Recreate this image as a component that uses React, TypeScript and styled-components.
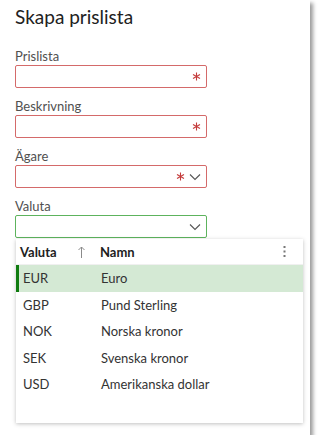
import styled, { createGlobalStyle } from "styled-components";

const GlobalStyle = createGlobalStyle`
  body {
    margin: 0;
    background: #ffffff;
    font-family: "Lato", "Open Sans", sans-serif;
  }
`;

const currencies = [
  { code: "EUR", name: "Euro" },
  { code: "GBP", name: "Pund Sterling" },
  { code: "NOK", name: "Norska kronor" },
  { code: "SEK", name: "Svenska kronor" },
  { code: "USD", name: "Amerikanska dollar" },
];

const Panel = styled.div`
  width: 310px;
  height: 435px;
  background: #fff;
  box-shadow: 3px 3px 4px rgba(0, 0, 0, 0.4);
  padding: 5px 0 0 15px;
  box-sizing: border-box;
`;

const Title = styled.h1`
  margin: 0 0 19px;
  font-size: 19px;
  font-weight: 400;
  color: #212121;
  line-height: 24px;
`;

const Field = styled.div`
  position: relative;
  display: flex;
  flex-direction: column;
  margin-bottom: 10px;
`;

const Label = styled.label`
  font-size: 13px;
  color: #505050;
  line-height: 17px;
`;

const Box = styled.div<{ $tone: "error" | "focus" }>`
  width: 192px;
  height: 23px;
  box-sizing: border-box;
  border: 1px solid ${(p) => (p.$tone === "error" ? "#d46a6a" : "#5db35d")};
  border-radius: 2px;
  display: flex;
  align-items: center;
  justify-content: flex-end;
  gap: 4px;
  padding-right: 5px;
`;

const Star = () => (
  <svg width="9" height="9" viewBox="0 0 9 9">
    <path
      d="M4.5 0.5 V8.5 M1 2.5 L8 6.5 M8 2.5 L1 6.5"
      fill="none"
      stroke="#c43b3b"
      strokeWidth="1.1"
    />
  </svg>
);

const Chevron = () => (
  <svg width="12" height="8" viewBox="0 0 12 8">
    <path d="M1 1.5 L6 6.5 L11 1.5" fill="none" stroke="#555" strokeWidth="1.1" />
  </svg>
);

const Popup = styled.div`
  position: absolute;
  top: 41px;
  left: 1px;
  width: 287px;
  height: 184px;
  background: #fff;
  box-shadow: 0 1px 4px rgba(0, 0, 0, 0.25);
  font-size: 13px;
`;

const HeadRow = styled.div`
  display: grid;
  grid-template-columns: 80px 1fr 20px;
  align-items: center;
  height: 25px;
  padding-left: 4px;
  font-weight: 700;
  color: #212121;
  border-bottom: 1px solid #f0f0f0;
`;

const HeadCell = styled.div`
  display: flex;
  justify-content: space-between;
  align-items: center;
  padding-right: 15px;
`;

const Row = styled.div<{ $selected?: boolean }>`
  display: grid;
  grid-template-columns: 78px 1fr;
  align-items: center;
  height: 26.5px;
  padding-left: 4px;
  color: #333;
  background: ${(p) => (p.$selected ? "#d4e9d4" : "transparent")};
  border-left: 3px solid ${(p) => (p.$selected ? "#107c10" : "transparent")};
  box-sizing: border-box;
`;

const Kebab = () => (
  <svg width="3" height="11" viewBox="0 0 3 11">
    <rect x="0.5" y="0" width="2" height="2" fill="#777" />
    <rect x="0.5" y="4.5" width="2" height="2" fill="#777" />
    <rect x="0.5" y="9" width="2" height="2" fill="#777" />
  </svg>
);

const SortArrow = () => (
  <svg width="7" height="12" viewBox="0 0 7 12">
    <path d="M3.5 1 V12 M0.5 4 L3.5 1 L6.5 4" fill="none" stroke="#8a8a8a" strokeWidth="1" />
  </svg>
);

export default function App() {
  return (
    <>
      <GlobalStyle />
      <Panel>
        <Title>Skapa prislista</Title>
        <Field>
          <Label>Prislista</Label>
          <Box $tone="error">
            <Star />
          </Box>
        </Field>
        <Field>
          <Label>Beskrivning</Label>
          <Box $tone="error">
            <Star />
          </Box>
        </Field>
        <Field>
          <Label>Ägare</Label>
          <Box $tone="error">
            <Star />
            <Chevron />
          </Box>
        </Field>
        <Field>
          <Label>Valuta</Label>
          <Box $tone="focus">
            <Chevron />
          </Box>
          <Popup>
            <HeadRow>
              <HeadCell>
                Valuta
                <SortArrow />
              </HeadCell>
              <div>Namn</div>
              <Kebab />
            </HeadRow>
            {currencies.map((c, i) => (
              <Row key={c.code} $selected={i === 0}>
                <span>{c.code}</span>
                <span>{c.name}</span>
              </Row>
            ))}
          </Popup>
        </Field>
      </Panel>
    </>
  );
}
